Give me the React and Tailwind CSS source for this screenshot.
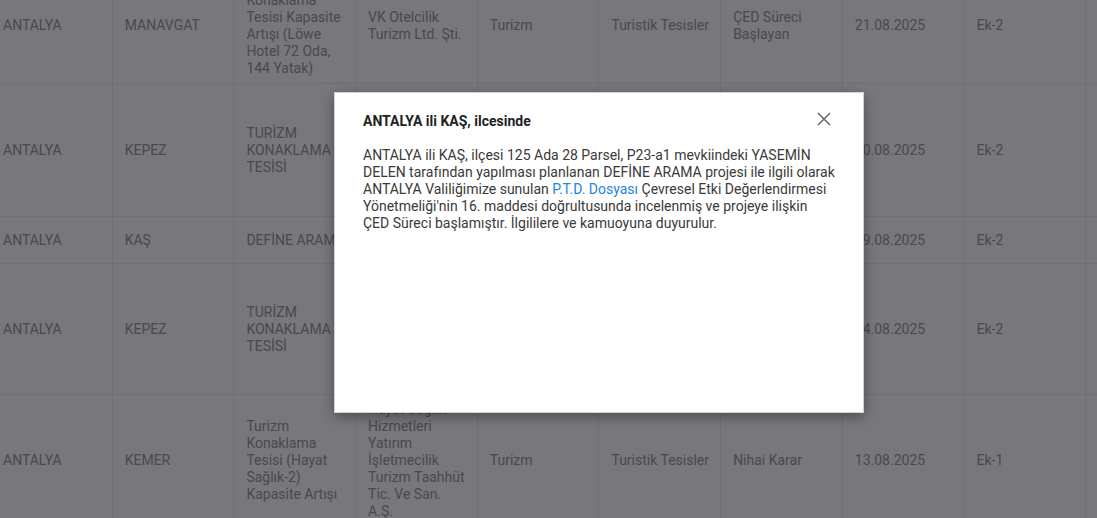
const ROWS = [
  {
    h: "h-[116px]",
    cells: [
      "ANTALYA",
      "MANAVGAT",
      "Turizm Konaklama Tesisi Kapasite Artışı (Löwe Hotel 72 Oda, 144 Yatak)",
      "VK Otelcilik Turizm Ltd. Şti.",
      "Turizm",
      "Turistik Tesisler",
      "ÇED Süreci Başlayan",
      "21.08.2025",
      "Ek-2",
      "",
    ],
  },
  {
    h: "h-[133px]",
    cells: [
      "ANTALYA",
      "KEPEZ",
      "TURİZM KONAKLAMA TESİSİ",
      "Özkaya Turizm İnşaat Gıda Sanayi ve Ticaret Ltd. Şti.",
      "Turizm",
      "Turistik Tesisler",
      "ÇED Süreci Başlayan",
      "20.08.2025",
      "Ek-2",
      "",
    ],
  },
  {
    h: "h-[47px]",
    cells: [
      "ANTALYA",
      "KAŞ",
      "DEFİNE ARAMA",
      "Yasemin Delen",
      "Diğer",
      "Define Arama",
      "ÇED Süreci Başlayan",
      "19.08.2025",
      "Ek-2",
      "",
    ],
  },
  {
    h: "h-[131px]",
    cells: [
      "ANTALYA",
      "KEPEZ",
      "TURİZM KONAKLAMA TESİSİ",
      "Akdeniz Turizm Otelcilik İnşaat Sanayi ve Ticaret A.Ş.",
      "Turizm",
      "Turistik Tesisler",
      "ÇED Süreci Başlayan",
      "14.08.2025",
      "Ek-2",
      "",
    ],
  },
  {
    h: "h-[132px]",
    cells: [
      "ANTALYA",
      "KEMER",
      "Turizm Konaklama Tesisi (Hayat Sağlık-2) Kapasite Artışı",
      "Hayat Sağlık Hizmetleri Yatırım İşletmecilik Turizm Taahhüt Tic. Ve San. A.Ş.",
      "Turizm",
      "Turistik Tesisler",
      "Nihai Karar",
      "13.08.2025",
      "Ek-1",
      "",
    ],
  },
];

export default function App() {
  return (
    <div className="relative h-[518px] w-[1097px] overflow-hidden bg-[#f0eff8] font-['Roboto','Liberation_Sans',sans-serif] text-[14px] leading-[17px]">
      <div className="-ml-[10px] -mt-[33px]">
        <table className="w-[1217px] table-fixed border-collapse">
          <colgroup>
            {ROWS[0].cells.map((_, i) => (
              <col key={i} className="w-[121.7px]" />
            ))}
          </colgroup>
          <tbody>
            {ROWS.map((row, r) => (
              <tr key={r} className={row.h}>
                {row.cells.map((c, i) => (
                  <td
                    key={i}
                    className="border border-[#dfdee8] py-[6px] pl-[12px] pr-[9px] align-middle text-[#949299]"
                  >
                    {c}
                  </td>
                ))}
              </tr>
            ))}
          </tbody>
        </table>
      </div>

      <div className="absolute inset-0 bg-black/50" />

      <div className="absolute left-[334px] top-[92px] h-[321px] w-[530px] border border-[#d2d2d2] bg-white px-[28px] pt-[20px] shadow-[0_4px_12px_rgba(0,0,0,0.35)]">
        <h2 className="mb-[17px] text-[14px] font-bold leading-[17px] text-[#222]">ANTALYA ili KAŞ, ilcesinde</h2>
        <button type="button" className="absolute right-[32px] top-[19px] text-[#666]">
          <svg width="14" height="14" viewBox="0 0 14 14" fill="none" stroke="currentColor" strokeWidth="1.5">
            <path d="M1 1l12 12M13 1L1 13" />
          </svg>
        </button>
        <p className="w-[473px] text-[14px] leading-[17px] text-[#3a3a3a]">
          ANTALYA ili KAŞ, ilçesi 125 Ada 28 Parsel, P23-a1 mevkiindeki YASEMİN DELEN tarafından yapılması
          planlanan DEFİNE ARAMA projesi ile ilgili olarak ANTALYA Valiliğimize sunulan{" "}
          <a className="text-[#2486e0]">P.T.D. Dosyası</a> Çevresel Etki Değerlendirmesi Yönetmeliği'nin 16.
          maddesi doğrultusunda incelenmiş ve projeye ilişkin ÇED Süreci başlamıştır. İlgililere ve kamuoyuna
          duyurulur.
        </p>
      </div>
    </div>
  );
}
